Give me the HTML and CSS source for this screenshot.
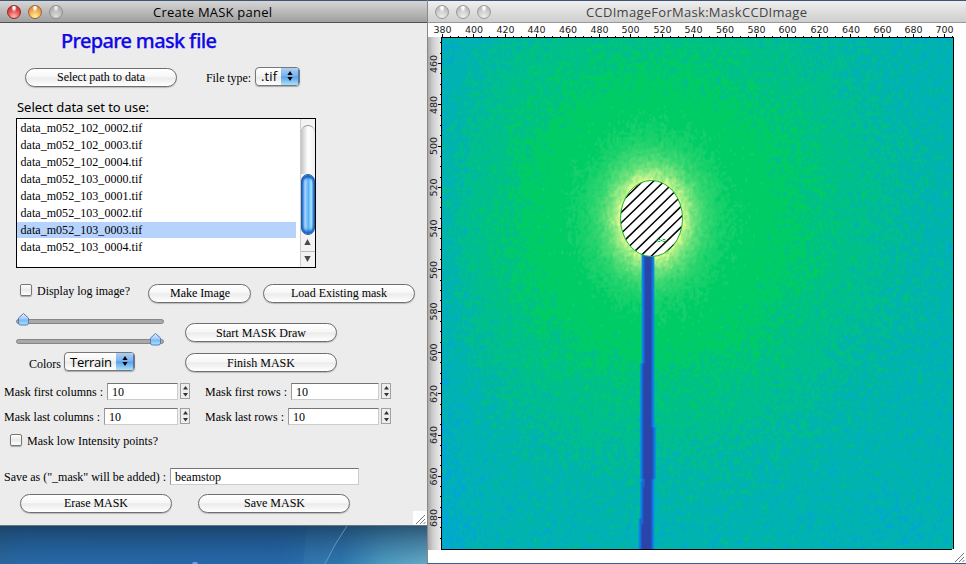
FILE: index.html
```html
<!DOCTYPE html>
<html lang="en">
<head>
<meta charset="utf-8">
<title>Create MASK panel</title>
<link rel="stylesheet" href="styles.css">
</head>
<body>
<main class="desktop">
  <div class="left">
    <section class="window panel">
      <header class="titlebar">
        <i class="light red"></i><i class="light amber"></i><i class="light grey"></i>
        <svg class="title" width="119" height="20"><text x="0" y="15" textLength="119">Create MASK panel</text></svg>
      </header>
      <div class="row heading"><svg width="160" height="34"><text x="0" y="24" textLength="156">Prepare mask file</text></svg></div>
      <div class="row path">
        <button class="btn wide"><svg width="88" height="16"><text y="12" textLength="88">Select path to data</text></svg></button>
        <svg class="typelabel" width="46" height="16"><text y="12" textLength="45">File type:</text></svg>
        <div class="popup tif"><svg width="18" height="16"><text y="12.5" textLength="16">.tif</text></svg><i><svg width="17" height="16"><path d="M9 3l2.600 4h-5.200zM9 13l-2.600-4h5.200z"/></svg></i></div>
      </div>
      <div class="row listlabel"><svg width="134" height="18"><text y="14" textLength="132">Select data set to use:</text></svg></div>
      <div class="list">
        <ul>
          <li>data_m052_102_0002.tif</li>
          <li>data_m052_102_0003.tif</li>
          <li>data_m052_102_0004.tif</li>
          <li>data_m052_103_0000.tif</li>
          <li>data_m052_103_0001.tif</li>
          <li>data_m052_103_0002.tif</li>
          <li class="selected">data_m052_103_0003.tif</li>
          <li>data_m052_103_0004.tif</li>
        </ul>
        <div class="scroll">
          <div class="track"></div>
          <div class="thumb"></div>
          <div class="arrow"><svg width="13" height="14"><path d="M6.500 4l3.200 6h-6.400z"/></svg></div>
          <div class="arrow"><svg width="13" height="16"><path d="M6.500 10l3.200-6h-6.400z"/></svg></div>
        </div>
      </div>
      <div class="row display">
        <i class="check"></i>
        <svg class="displaylabel" width="95" height="16"><text y="11" textLength="93">Display log image?</text></svg>
        <button class="btn make"><svg width="60" height="16"><text y="12" textLength="60">Make Image</text></svg></button>
        <button class="btn"><svg width="96" height="16"><text y="12" textLength="96">Load Existing mask</text></svg></button>
      </div>
      <div class="tools">
        <div class="adjust">
          <svg class="sliders" width="150" height="34">
            <defs><linearGradient id="knob" x2="0" y2="1"><stop offset="0" stop-color="#e4f0ff"/><stop offset=".5" stop-color="#9dc9f5"/><stop offset=".55" stop-color="#79b6f0"/><stop offset="1" stop-color="#a6e5ff"/></linearGradient></defs>
            <rect x=".5" y="1.500" width="147" height="4" rx="2"/>
            <rect x=".5" y="21.500" width="147" height="4" rx="2"/>
            <path d="M7.500-4.500l5 4.500v5q0 2-2 2h-6q-2 0-2-2v-5z"/>
            <path d="M139.500 15.500l5 4.500v5q0 2-2 2h-6q-2 0-2-2v-5z"/>
          </svg>
          <div class="colors">
            <svg width="32" height="16"><text y="12" textLength="32">Colors</text></svg>
            <div class="popup terrain"><svg width="45" height="16"><text y="12.500" textLength="42">Terrain</text></svg><i><svg width="17" height="16"><path d="M9 3l2.600 4h-5.200zM9 13l-2.600-4h5.200z"/></svg></i></div>
          </div>
        </div>
        <div class="draw">
          <button class="btn wide"><svg width="90" height="16"><text y="12" textLength="90">Start MASK Draw</text></svg></button>
          <button class="btn wide"><svg width="68" height="16"><text y="12" textLength="68">Finish MASK</text></svg></button>
        </div>
      </div>
      <div class="row counts">
        <div class="field first"><svg width="99" height="16"><text y="12" textLength="99">Mask first columns :</text></svg><span class="input">10</span><i class="step"><svg width="9" height="14"><path d="M4.500 2l2.500 3.500h-5zM4.500 12.500l2.500-3.500h-5z"/></svg></i></div>
        <div class="field"><svg width="82" height="16"><text x="0" y="12" textLength="82">Mask first rows :</text></svg><span class="input">10</span><i class="step"><svg width="9" height="14"><path d="M4.500 2l2.500 3.500h-5zM4.500 12.500l2.500-3.500h-5z"/></svg></i></div>
      </div>
      <div class="row counts">
        <div class="field first"><svg width="96" height="16"><text y="12" textLength="96">Mask last columns :</text></svg><span class="input">10</span><i class="step"><svg width="9" height="14"><path d="M4.500 2l2.500 3.500h-5zM4.500 12.500l2.500-3.500h-5z"/></svg></i></div>
        <div class="field"><svg width="79" height="16"><text x="0" y="12" textLength="79">Mask last rows :</text></svg><span class="input">10</span><i class="step"><svg width="9" height="14"><path d="M4.500 2l2.500 3.500h-5zM4.500 12.500l2.500-3.500h-5z"/></svg></i></div>
      </div>
      <div class="row low"><i class="check"></i><svg width="132" height="16"><text y="12" textLength="131">Mask low Intensity points?</text></svg></div>
      <div class="row save"><svg width="164" height="16"><text y="11.500" textLength="162">Save as ("_mask" will be added) :</text></svg><span class="input name">beamstop</span></div>
      <div class="row actions">
        <button class="btn wide"><svg width="64" height="16"><text y="12" textLength="64">Erase MASK</text></svg></button>
        <button class="btn wide"><svg width="61" height="16"><text y="12" textLength="61">Save MASK</text></svg></button>
      </div>
      <svg class="grip" width="14" height="14"><path d="M3 13L12 4M7 13l5-5M10.500 13l2-2"/></svg>
    </section>
    <svg class="wallpaper" width="427" height="38">
      <defs>
        <linearGradient id="wall"><stop offset="0" stop-color="#2a6599"/><stop offset=".05" stop-color="#2768a5"/><stop offset=".65" stop-color="#2567a8"/><stop offset=".8" stop-color="#2e76ae"/><stop offset=".9" stop-color="#4c9abe"/><stop offset="1" stop-color="#64a8c4"/></linearGradient>
        <linearGradient id="shade" x2="0" y2="1"><stop offset="0" stop-color="#163553" stop-opacity=".7"/><stop offset="1" stop-color="#1b4c80" stop-opacity="0"/></linearGradient>
      </defs>
      <rect width="427" height="38" fill="url(#wall)"/>
      <path d="M347 0Q335 17 325 38H303L307 0Z" fill="#5a9ac6" opacity=".18"/>
      <rect width="427" height="38" fill="url(#shade)"/>
      <path d="M347 0Q335 17 325 38" fill="none" stroke="#8fb5d0" opacity=".6"/>
      <path d="M192 38l1-2h4l1 2z" fill="#7899e0"/>
    </svg>
  </div>
  <section class="window viewer">
    <header class="titlebar">
      <i class="light grey"></i><i class="light grey"></i><i class="light grey"></i>
      <svg class="title" width="222" height="20"><text x="0" y="15" textLength="221">CCDImageForMask:MaskCCDImage</text></svg>
    </header>
    <div class="plot">
      <svg class="axis xaxis" width="538" height="14">
        <path id="xticks"/>
        <g>
          <text x="14.500" y="10">380</text><text x="46" y="10">400</text><text x="77.500" y="10">420</text><text x="108.500" y="10">440</text><text x="140" y="10">460</text><text x="171.500" y="10">480</text><text x="202.500" y="10">500</text><text x="234.500" y="10">520</text><text x="265.500" y="10">540</text><text x="297" y="10">560</text><text x="328.500" y="10">580</text><text x="359.500" y="10">600</text><text x="391.500" y="10">620</text><text x="423" y="10">640</text><text x="454.500" y="10">660</text><text x="485.500" y="10">680</text><text x="516.500" y="10">700</text>
        </g>
      </svg>
      <div class="middle">
        <svg class="axis yaxis" width="13" height="513">
          <path id="yticks"/>
          <g>
            <text transform="translate(9 27)rotate(-90)">460</text><text transform="translate(9 68)rotate(-90)">480</text><text transform="translate(9 109)rotate(-90)">500</text><text transform="translate(9 150.500)rotate(-90)">520</text><text transform="translate(9 191.500)rotate(-90)">540</text><text transform="translate(9 233)rotate(-90)">560</text><text transform="translate(9 274.500)rotate(-90)">580</text><text transform="translate(9 315.500)rotate(-90)">600</text><text transform="translate(9 357)rotate(-90)">620</text><text transform="translate(9 398)rotate(-90)">640</text><text transform="translate(9 439.500)rotate(-90)">660</text><text transform="translate(9 481)rotate(-90)">680</text>
          </g>
        </svg>
        <div class="frame">
          <canvas id="heat" width="325" height="248"></canvas>
          <svg class="mask" width="511" height="511">
            <defs><clipPath id="oval"><ellipse cx="209.500" cy="180.500" rx="31" ry="38"/></clipPath></defs>
            <ellipse cx="209.500" cy="180.500" rx="31" ry="38" fill="#fff"/>
            <path id="hatch" clip-path="url(#oval)"/>
            <ellipse cx="209.500" cy="180.500" rx="31" ry="38" fill="none" stroke="#16b52f"/>
            <path d="M216 201.500h2l1 1h1l1-1h2l1 1-1 1h-2l-1-1h-1l-1 1h-2l-1-1z" fill="none" stroke="#12b840"/>
          </svg>
        </div>
      </div>
      <svg class="grip" width="14" height="14"><path d="M3 13L12 4M7 13l5-5M10.500 13l2-2"/></svg>
    </div>
  </section>
</main>
<script src="plot.js"></script>
</body>
</html>
```
FILE: styles.css
```css
* { box-sizing: border-box; }
body { margin: 0; font: 12px "Liberation Serif", serif; color: #000; overflow: hidden; }
svg { display: block; flex: none; overflow: visible; }
i { display: block; flex: none; }
button { font: inherit; color: #000; }
.desktop { display: flex; width: 966px; height: 564px; background: #35618a; }
.left { width: 427px; flex: none; background: #35618a; }
.window { position: relative; }
.panel { height: 526px; background: #ececec; border-bottom: 1px solid #66757f; display: flex; flex-direction: column; }
.titlebar { height: 23px; flex: none; border-top: 1px solid #3b5672; border-bottom: 1px solid #515151; background: linear-gradient(#d5d5d5, #bdbdbd 45%, #a0a0a0); display: flex; align-items: center; gap: 7px; padding: 1px 0 0 7px; position: relative; }
.title { position: absolute; left: 153px; top: 1px; font: 13px "Open Sans", sans-serif; }
.light { width: 14px; height: 14px; border-radius: 50%; border: 1px solid #888; }
.red { border-color: #8a2a2b; background: radial-gradient(ellipse at 50% 12%, #fff 0 10%, transparent 32%), radial-gradient(circle at 50% 90%, #ffb9ae, #e65350 50%, #bc2027); }
.amber { border-color: #99633a; background: radial-gradient(ellipse at 50% 12%, #fff 0 10%, transparent 32%), radial-gradient(circle at 50% 90%, #fff3a1, #f4ae53 50%, #cf7425); }
.grey { border-color: #8f8f8f; background: radial-gradient(ellipse at 50% 12%, #eee 0 10%, transparent 32%), radial-gradient(circle at 50% 90%, #dedede, #bababa 55%, #aaa); }
.row { display: flex; align-items: center; flex: none; }
.heading { height: 36px; padding-left: 61px; font: 500 20px "Noto Sans", sans-serif; fill: #1008e6; stroke: #1008e6; stroke-width: .25; }
.path { height: 36px; padding-left: 25px; }
.btn { height: 19px; padding: 0; border: 1.500px solid #6e6e6e; border-radius: 10px; background: linear-gradient(#fff, #f7f7f7 45%, #ebebeb 52%, #fff); box-shadow: 0 1px 1px #bbb; display: flex; align-items: center; justify-content: center; width: 152px; flex: none; }
.typelabel { margin: 2px 3px 0 29px; }
.popup { height: 19px; border: 1px solid #777; border-radius: 4px; background: linear-gradient(#fff, #f3f3f3 48%, #e9e9e9 52%, #fff); box-shadow: 0 1px 1px #aaa; display: flex; align-items: center; justify-content: space-between; padding-left: 5px; font: 13px "Open Sans", sans-serif; overflow: hidden; flex: none; }
.popup i { width: 18px; height: 19px; padding-top: 1px; background: linear-gradient(#b5d3f5, #78b1eb 48%, #58a1e8 52%, #b3eaff); box-shadow: inset 0 1px #3963b0, inset -1px 0 #4b75b4; }
.tif { width: 45px; margin-top: -2px; }
.listlabel { height: 23px; padding: 1px 0 0 17px; font: 13px "Noto Sans", sans-serif; }
.list { height: 150px; width: 300px; margin-left: 16px; flex: none; border: 1px solid #000; background: #fff; display: flex; justify-content: space-between; }
ul { list-style: none; margin: 0; padding: 1px 0 0; width: 279px; }
li { height: 17px; line-height: 17px; padding-left: 3.500px; letter-spacing: .04px; }
.selected { background: linear-gradient(#b5d3fd 16px, #fff 16px); }
.scroll { width: 15px; border-left: 1px solid #ccc; display: flex; flex-direction: column; background: #f3f3f3; }
.track { height: 49px; margin-top: 6px; border-top: 1px solid #999; border-radius: 7px 7px 0 0; background: linear-gradient(90deg, #c4c4c4, #fff 50%, #eee); }
.thumb { height: 61px; border: 1px solid #245cae; border-radius: 7px; background: linear-gradient(90deg, #287ad5, #aad6ff 25%, #6eb5f7 48%, #56a9f5 52%, #a6eaff 78%, #3484d5); box-shadow: inset 0 3px 2px #1c62c0, inset 0 -3px 3px #1762c2; }
.arrow { height: 16px; fill: #4a4a4a; }
.arrow + .arrow { border-top: 1px solid #bbb; }
.display { height: 50px; padding-left: 20px; }
.check { width: 12px; height: 12px; border: 1px solid #777; border-radius: 2px; background: linear-gradient(#fff, #e9e9e9 50%, #fff); box-shadow: 0 1px 1px #aaa; margin-top: -6px; }
.displaylabel { margin: -3px 16px 0 5px; }
.make { width: 103px; margin-right: 12px; }
.tools { display: flex; height: 61px; flex: none; padding-left: 16px; }
.adjust { width: 169px; }
.sliders { height: 34px; }
.sliders rect { fill: #a9a9a9; stroke: #858585; }
.sliders path { fill: url(#knob); stroke: #5878b8; }
.colors { display: flex; align-items: center; gap: 3px; padding-left: 13px; height: 20px; }
.colors > svg { margin-top: 3px; }
.terrain { width: 71px; margin-top: -1px; }
.draw { display: flex; flex-direction: column; gap: 11px; padding-top: 5px; }
.counts { height: 25px; padding-left: 4px; }
.field { display: flex; align-items: center; width: 186px; }
.first { margin-right: 15px; }
.input { flex: 1; height: 17px; line-height: 16px; padding-left: 4px; margin: 0 2px 0 4px; background: #fff; border: 1px solid #ccc; border-top-color: #747474; border-left-color: #999; font-size: 12px; }
.step { width: 10px; height: 16px; margin-top: -1px; border: 1px solid #a0a0a0; background: #eee; fill: #333; }
.low { height: 22px; padding-left: 10px; gap: 5px; }
.low .check { margin-top: -1px; }
.low svg { margin-top: 1px; }
.save { height: 25px; margin-top: 13px; padding-left: 4px; }
.name { flex: none; width: 189px; margin-left: 2px; line-height: 16px; }
.actions { height: 26px; margin-top: 1px; padding-left: 20px; gap: 26px; }
.grip { position: absolute; right: 0; bottom: 0; background: #fff; }
.grip path { stroke: #777; fill: none; }
.viewer { width: 539px; flex: none; border-left: 1px solid #888; height: 563px; background: #fff; }
.viewer .titlebar { background: linear-gradient(#efefef, #dedede 50%, #cecece); border-bottom-color: #999; }
.viewer .light { border-color: #999; background: radial-gradient(ellipse at 50% 10%, #fff 0 10%, transparent 35%), radial-gradient(circle at 50% 90%, #eee, #cacaca 55%, #aaa); }
.viewer .title { left: 158px; fill: #444; }
.plot { height: 540px; }
.axis { font: 9.500px "DejaVu Sans", sans-serif; fill: #222; text-anchor: middle; }
.axis path { stroke: #000; fill: none; shape-rendering: crispEdges; }
.middle { display: flex; height: 513px; }
.yaxis { background: linear-gradient(90deg, #aaa, #cfcfcf 40%, #ececec); }
.frame { width: 513px; height: 513px; border: 1px solid #000; position: relative; }
#heat { display: block; width: 511px; height: 511px; }
.mask { position: absolute; left: 0; top: 0; }
#hatch { stroke: #000; stroke-width: 1.500; fill: none; }
```
FILE: plot.js
```js
// Deterministic noise source
let seed = 20713;
function rnd() {
  seed = (seed * 1664525 + 1013904223) >>> 0;
  return seed / 4294967296;
}
const W = 325, H = 248;
const noise = new Float32Array(W * H).map(() => rnd() + rnd() + rnd() - 1.5);

// Terrain colour scale, quantised
const stops = [[0, 51, 51, 153], [.15, 0, 153, 255], [.25, 0, 204, 102], [.5, 255, 255, 153]];
function terrain(v) {
  v = Math.max(0, Math.min(.5, v));
  v = v > .265 ? Math.round(v * 100) / 100 : Math.round(v / .025) * .025;
  let i = 1;
  while (i < 3 && v > stops[i][0]) i++;
  const a = stops[i - 1], b = stops[i], t = (v - a[0]) / (b[0] - a[0]);
  return [1, 2, 3].map(k => a[k] + (b[k] - a[k]) * t);
}

const ctx = document.getElementById('heat').getContext('2d');
const img = ctx.createImageData(W, H);
for (let j = 0; j < H; j++) {
  for (let i = 0; i < W; i++) {
    const x = (i + .5) * 511 / W, y = (j + .5) * 511 / H;
    const dx = x - 209.5, dy = y - 180.5;
    const r = Math.hypot(dx * (dx < 0 ? 1.05 : .96), dy * .97);
    const d = Math.max(0, (Math.hypot(dx / 31, dy / 38) - 1) * 34);
    const n = noise[j * W + i] * .7 + noise[Math.max(0, j * W + i - 1)] * .35 + noise[Math.max(0, (j - 1) * W + i)] * .35;
    let v = .203 + .052 * Math.exp(-Math.pow(r / 208, 3)) - .00003 * Math.max(0, r - 200);
    v -= .016 * Math.exp(-x / 26);
    v += n * .019 * Math.min(1, .25 + r / 250);
    if (d < 110) v += (.2 + n * .05) * Math.exp(-Math.pow(d / 19, 1.1));
    if (y > 214) {
      let l = 199, q = 212;
      if (y > 325) { l = 197.500; q = 213; }
      if (y > 390) { l = 197.500; q = 214; }
      if (y > 440) { l = 199 - (y - 440) / 24; q = 212; }
      if (x > l && x < q) {
        const e = Math.min(x - l, q - x);
        v = e < 1.6 ? .135 : e < 3.400 ? .08 : .025;
      }
    }
    const c = terrain(v), o = (j * W + i) * 4;
    img.data[o] = c[0]; img.data[o + 1] = c[1]; img.data[o + 2] = c[2]; img.data[o + 3] = 255;
  }
}
ctx.putImageData(img, 0, 0);

// Axis ticks: major every 20 units, minor every 5
let xt = '', yt = '', h = '';
for (let k = 0; k <= 65; k++) {
  const x = Math.round(14 + k * 7.85) + .5;
  if (x < 526) xt += `M${x} ${k % 4 ? 12.500 : 10.500}V14`;
}
for (let k = -2; k <= 46; k++) {
  const y = Math.round(26 + k * 10.32) + .5;
  if (y > 0 && y < 513) yt += `M${k % 4 ? 11.500 : 10} ${y}H13`;
}
for (let s = 130; s < 420; s += 10.4) h += `M150 ${s}L280 ${s - 126}`;
document.getElementById('xticks').setAttribute('d', xt);
document.getElementById('yticks').setAttribute('d', yt);
document.getElementById('hatch').setAttribute('d', h);
```
